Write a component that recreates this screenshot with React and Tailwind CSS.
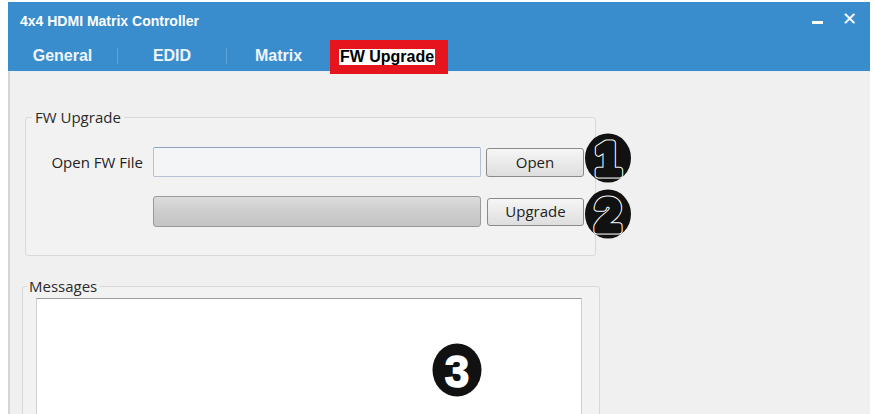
import React from 'react'

const digitFont = "'Liberation Sans', Arial, sans-serif"

function Badge({ n, solid }) {
  if (solid) {
    return (
      <svg width="50" height="54" viewBox="0 0 50 54" className="shrink-0">
        <ellipse cx="25" cy="27" rx="24.5" ry="26.5" fill="#111" />
        <text x="25" y="44" textAnchor="middle" fontFamily={digitFont} fontWeight="700" fontSize="44" fill="#fff" stroke="#fff" strokeWidth="1.5">{n}</text>
      </svg>
    )
  }
  return (
    <svg width="48" height="50" viewBox="0 0 48 50" className="shrink-0 overflow-visible">
      <ellipse cx="24" cy="25" rx="23" ry="24.5" fill="#111" />
      <text x="24" y="42" textAnchor="middle" fontFamily={digitFont} fontWeight="700" fontSize="46" fill="#fff" stroke="#fff" strokeWidth="7" strokeLinejoin="round">{n}</text>
      <text x="24" y="42" textAnchor="middle" fontFamily={digitFont} fontWeight="700" fontSize="46" fill="#111" stroke="#111" strokeWidth="5" strokeLinejoin="round">{n}</text>
    </svg>
  )
}

function Tab({ label, w, sep }) {
  return (
    <div className={`flex items-center h-full ${w}`}>
      <div className="flex-1 text-center">{label}</div>
      {sep && <div className="w-px h-[16px] bg-[#5ea3da]" />}
    </div>
  )
}

export default function App(){
  return (
    <div className="w-[874px] h-[414px] bg-white overflow-hidden font-['Liberation_Sans',Arial,sans-serif]">
      <div className="ml-[8px] mt-[2px] w-[862px] h-[412px] flex flex-col">
        <div className="bg-[#3a8dcd] text-white">
          <div className="h-[38px] flex items-center pl-[12px] pr-[12px]">
            <div className="text-[14px] font-bold flex-1">4x4 HDMI Matrix Controller</div>
            <div className="w-[11px] h-[3px] bg-white mr-[19px] mt-[3px]" />
            <div className="text-[18px] leading-none -mt-[4px] mr-[1px]">✕</div>
          </div>
          <div className="h-[31px] flex items-center text-[16px] font-bold text-[#eef5fb]">
            <Tab label="General" w="w-[110px]" sep />
            <Tab label="EDID" w="w-[109px]" sep />
            <Tab label="Matrix" w="w-[103px]" />
            <div className="w-[118px] h-[34px] mt-[3px] bg-[#e5141d] flex items-center justify-center relative z-10">
              <span className="bg-white text-black px-[1px] leading-[16px] -ml-[4px]">FW Upgrade</span>
            </div>
          </div>
        </div>
        <div className="flex-1 bg-[#f0f0f0] border-l-2 border-[#d4d4d4] border-t border-t-[#e8eef4] font-['Open_Sans',sans-serif] text-[15px] text-[#333]">
          <fieldset className="ml-[15px] mt-[35px] w-[571px] min-w-0 h-[149px] border border-[#d9d9d9] rounded-[3px] bg-[#f2f2f2]">
            <legend className="ml-[6px] px-[3px] leading-[20px] text-[#2a2a2a]">FW Upgrade</legend>
            <div className="mt-[20px] h-[30px] flex items-center">
              <div className="w-[127px] shrink-0 text-right pr-[10px] text-[#222] whitespace-nowrap">Open FW File</div>
              <div className="w-[328px] shrink-0 h-[30px] border border-[#b4c2d2] border-t-[#8fa4bf] rounded-[2px] bg-[#f4f5f6]" />
              <button className="ml-[5px] shrink-0 w-[98px] h-[29px] border border-[#8a8a8a] rounded-[3px] bg-gradient-to-b from-[#f6f6f6] to-[#dedede] text-[15px] text-[#222]">Open</button>
              <div className="-mt-[8px]"><Badge n="1" /></div>
            </div>
            <div className="mt-[19px] h-[31px] flex items-center">
              <div className="w-[127px] shrink-0" />
              <div className="w-[328px] shrink-0 h-[31px] border border-[#9a9a9a] rounded-[3px] bg-gradient-to-b from-[#dcdcdc] via-[#cdcdcd] to-[#c4c4c4]" />
              <button className="ml-[6px] shrink-0 w-[97px] h-[28px] border border-[#8a8a8a] rounded-[3px] bg-gradient-to-b from-[#f6f6f6] to-[#dedede] text-[15px] text-[#222]">Upgrade</button>
              <div className="mt-[4px]"><Badge n="2" /></div>
            </div>
          </fieldset>
          <fieldset className="ml-[12px] mt-[20px] w-[578px] min-w-0 h-[200px] border border-[#d9d9d9] rounded-[3px] bg-[#f2f2f2]">
            <legend className="ml-[4px] px-[2px] leading-[20px] text-[#2a2a2a]">Messages</legend>
            <div className="ml-[13px] mt-[2px] w-[546px] h-[140px] bg-white border border-[#d0d0d0] border-t-[#9a9a9a] pl-[395px] pt-[44px]">
              <Badge n="3" solid />
            </div>
          </fieldset>
        </div>
      </div>
    </div>
  )
}
